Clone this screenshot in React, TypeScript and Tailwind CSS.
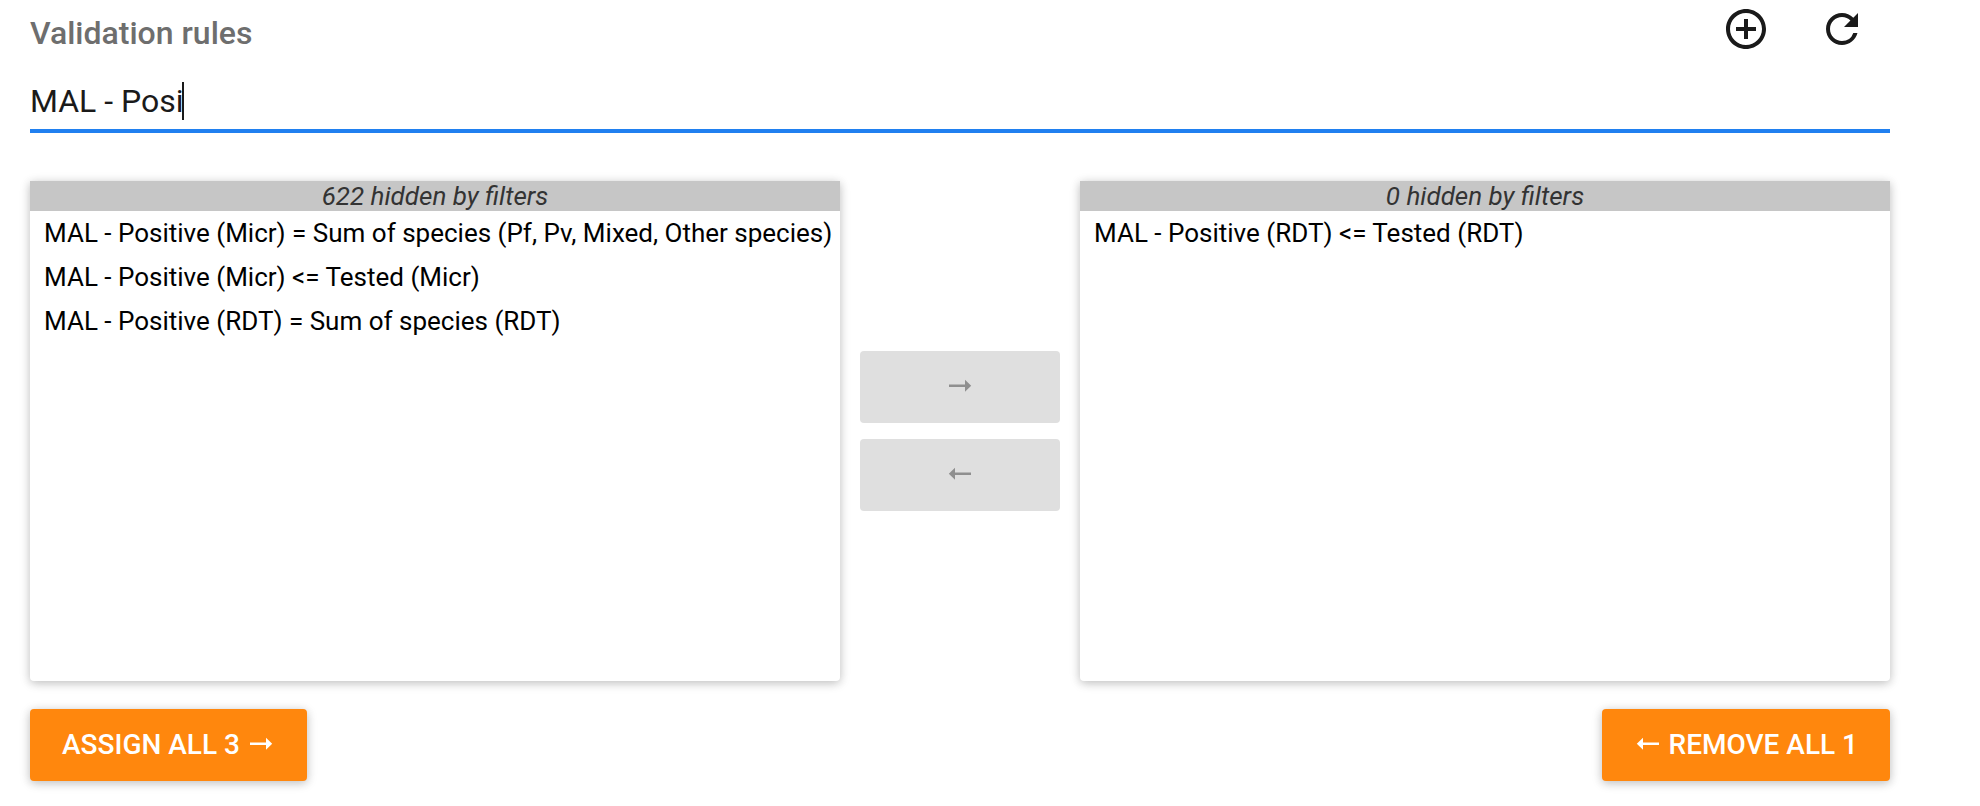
import { useState } from "react";
import { MdAddCircleOutline, MdRefresh } from "react-icons/md";

const SHADOW = "shadow-[0_2px_12px_rgba(0,0,0,0.14),0_2px_8px_rgba(0,0,0,0.14)]";

function RulePanel({ label, hidden, rules }: { label: string; hidden: number; rules: string[] }) {
  return (
    <section aria-label={label} className={`flex h-[500px] min-w-0 flex-1 flex-col rounded-b bg-white ${SHADOW}`}>
      <p className="bg-[#c6c6c6] text-center text-[26px] leading-[30px] text-[#333333] italic">
        {hidden} hidden by filters
      </p>
      <ul className="text-[26px] leading-[44px] text-black">
        {rules.map((rule) => (
          <li key={rule} className="truncate pl-3.5">
            {rule}
          </li>
        ))}
      </ul>
    </section>
  );
}

function Arrow({ direction }: { direction: "left" | "right" }) {
  return (
    <svg viewBox="0 0 28 24" width="28" height="24" fill="currentColor" aria-hidden="true">
      {direction === "right" ? (
        <path d="M3 9.5H19V4.8L25.2 10.8L19 16.8V12.1H3Z" />
      ) : (
        <path d="M25 9.5H9V4.8L2.8 10.8L9 16.8V12.1H25Z" />
      )}
    </svg>
  );
}

const MOVE = "flex h-[72px] items-center justify-center rounded bg-[#dfdfdf] text-[#8f8f8f]";
const ACTION = `flex h-[72px] items-center gap-[7px] rounded bg-[#ff870d] px-8 text-[28px] font-medium text-white ${SHADOW}`;

export default function App() {
  const [query, setQuery] = useState("MAL - Posi");

  return (
    <main className="bg-white pr-[90px] pb-6 pl-[30px] font-[Roboto,sans-serif]">
      <header className="flex items-start justify-between pt-[5px]">
        <h1 className="pt-2 text-[32px] leading-10 font-medium text-[#6e6e6e]">
          <label htmlFor="rule-filter">Validation rules</label>
        </h1>
        <div className="flex gap-12 pr-6 text-[#1a1a1a]">
          <button type="button" aria-label="Add rule">
            <MdAddCircleOutline size={48} />
          </button>
          <button type="button" aria-label="Refresh rules">
            <MdRefresh size={48} />
          </button>
        </div>
      </header>

      <div className="relative mt-6 border-b-4 border-[#2080f0]">
        <input
          id="rule-filter"
          type="text"
          value={query}
          onChange={(event) => setQuery(event.target.value)}
          className="block h-[52px] w-full bg-transparent pb-1 text-[32px] text-[#1a1a1a] caret-transparent outline-none"
        />
        <span aria-hidden="true" className="absolute top-[5px] left-[152px] h-[38px] w-0.5 bg-[#1a1a1a]" />
      </div>

      <div className="mt-12 flex items-center gap-5">
        <RulePanel
          label="Available rules"
          hidden={622}
          rules={[
            "MAL - Positive (Micr) = Sum of species (Pf, Pv, Mixed, Other species)",
            "MAL - Positive (Micr) <= Tested (Micr)",
            "MAL - Positive (RDT) = Sum of species (RDT)",
          ]}
        />
        <div className="flex w-[200px] flex-col gap-4">
          <button type="button" disabled aria-label="Assign selected" className={MOVE}>
            <Arrow direction="right" />
          </button>
          <button type="button" disabled aria-label="Remove selected" className={MOVE}>
            <Arrow direction="left" />
          </button>
        </div>
        <RulePanel label="Assigned rules" hidden={0} rules={["MAL - Positive (RDT) <= Tested (RDT)"]} />
      </div>

      <div className="mt-7 flex justify-between">
        <button type="button" className={ACTION}>
          ASSIGN ALL 3
          <Arrow direction="right" />
        </button>
        <button type="button" className={ACTION}>
          <Arrow direction="left" />
          REMOVE ALL 1
        </button>
      </div>
    </main>
  );
}
